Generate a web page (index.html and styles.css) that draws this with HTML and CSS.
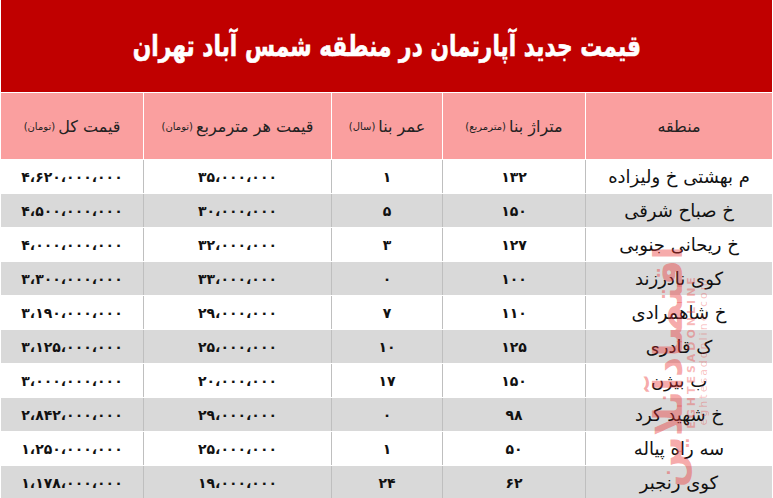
FILE: index.html
```html
<!DOCTYPE html>
<html lang="fa" dir="rtl">
<head>
<meta charset="utf-8">
<link rel="stylesheet" href="styles.css">
</head>
<body>
<div class="page">
  <div class="title"><span class="title-text">قیمت جدید آپارتمان در منطقه شمس آباد تهران</span></div>
  <div class="row head">
    <div class="cell">منطقه</div>
    <div class="cell">متراژ بنا <small>(مترمربع)</small></div>
    <div class="cell">عمر بنا <small>(سال)</small></div>
    <div class="cell">قیمت هر مترمربع <small>(تومان)</small></div>
    <div class="cell">قیمت کل<small>(تومان)</small></div>
  </div>
  <div class="row"><div class="cell name">م بهشتی خ ولیزاده</div><div class="cell num">۱۳۲</div><div class="cell num">۱</div><div class="cell num">۳۵،۰۰۰،۰۰۰</div><div class="cell num">۴،۶۲۰،۰۰۰،۰۰۰</div></div>
  <div class="row alt"><div class="cell name">خ صباح شرقی</div><div class="cell num">۱۵۰</div><div class="cell num">۵</div><div class="cell num">۳۰،۰۰۰،۰۰۰</div><div class="cell num">۴،۵۰۰،۰۰۰،۰۰۰</div></div>
  <div class="row"><div class="cell name">خ ریحانی جنوبی</div><div class="cell num">۱۲۷</div><div class="cell num">۳</div><div class="cell num">۳۲،۰۰۰،۰۰۰</div><div class="cell num">۴،۰۰۰،۰۰۰،۰۰۰</div></div>
  <div class="row alt"><div class="cell name">کوی نادرزند</div><div class="cell num">۱۰۰</div><div class="cell num">۰</div><div class="cell num">۳۳،۰۰۰،۰۰۰</div><div class="cell num">۳،۳۰۰،۰۰۰،۰۰۰</div></div>
  <div class="row"><div class="cell name">خ شاهمرادی</div><div class="cell num">۱۱۰</div><div class="cell num">۷</div><div class="cell num">۲۹،۰۰۰،۰۰۰</div><div class="cell num">۳،۱۹۰،۰۰۰،۰۰۰</div></div>
  <div class="row alt"><div class="cell name">ک قادری</div><div class="cell num">۱۲۵</div><div class="cell num">۱۰</div><div class="cell num">۲۵،۰۰۰،۰۰۰</div><div class="cell num">۳،۱۲۵،۰۰۰،۰۰۰</div></div>
  <div class="row"><div class="cell name">ب بیژن</div><div class="cell num">۱۵۰</div><div class="cell num">۱۷</div><div class="cell num">۲۰،۰۰۰،۰۰۰</div><div class="cell num">۳،۰۰۰،۰۰۰،۰۰۰</div></div>
  <div class="row alt"><div class="cell name">خ شهید کرد</div><div class="cell num">۹۸</div><div class="cell num">۰</div><div class="cell num">۲۹،۰۰۰،۰۰۰</div><div class="cell num">۲،۸۴۲،۰۰۰،۰۰۰</div></div>
  <div class="row"><div class="cell name">سه راه پیاله</div><div class="cell num">۵۰</div><div class="cell num">۱</div><div class="cell num">۲۵،۰۰۰،۰۰۰</div><div class="cell num">۱،۲۵۰،۰۰۰،۰۰۰</div></div>
  <div class="row alt"><div class="cell name">کوی رنجبر</div><div class="cell num">۶۲</div><div class="cell num">۲۴</div><div class="cell num">۱۹،۰۰۰،۰۰۰</div><div class="cell num">۱،۱۷۸،۰۰۰،۰۰۰</div></div>

  <div class="wm">
    <div class="wm-logo">اقتصادآنلاین</div>
    <div class="wm-en">EGHTESADONLINE</div>
    <div class="wm-url">eghtesadonline.com</div>
  </div>
</div>
</body>
</html>
```
FILE: styles.css
```css
html, body {
  margin: 0;
  padding: 0;
  background: #ffffff;
}
.page {
  position: relative;
  width: 771px;
  margin: 0 1px;
  font-family: "DejaVu Sans", sans-serif;
  color: #111;
  overflow: hidden;
  height: 498px;
}
.title {
  height: 92px;
  margin-bottom: 1px;
  background: #c00000;
  color: #ffffff;
  display: flex;
  align-items: center;
  justify-content: center;
}
.title-text {
  display: inline-block;
  font-weight: bold;
  font-size: 29px;
  white-space: nowrap;
  transform: scaleX(0.75);
  -webkit-text-stroke: 0.6px #ffffff;
}
.row {
  display: grid;
  grid-template-columns: 187px 143px 111px 188px 142px;
  height: 33px;
  margin-bottom: 1px;
  background: #ffffff;
}
.row.alt {
  background: #d9d9d9;
}
.row.head {
  height: 66px;
  background: #fa9f9f;
}
.cell {
  display: flex;
  align-items: center;
  justify-content: center;
  border-left: 1px solid #bfbfbf;
  white-space: nowrap;
}
.cell:last-child {
  border-left: none;
}
.head .cell {
  border-left-color: #ffffff;
  font-size: 16px;
  color: #222;
}
.head small {
  font-size: 10px;
  margin-right: 3px;
}
.name {
  font-size: 18px;
}
.num {
  font-size: 14px;
  font-weight: bold;
}
.wm {
  position: absolute;
  left: 644px;
  top: 245px;
  width: 72px;
  height: 225px;
  pointer-events: none;
}
.wm-logo, .wm-en, .wm-url {
  position: absolute;
  white-space: nowrap;
  transform: rotate(-90deg);
  transform-origin: center center;
}
.wm-logo {
  left: -87px;
  top: 88px;
  width: 220px;
  text-align: center;
  font-size: 40px;
  font-weight: bold;
  color: rgba(235, 50, 50, 0.42);
}
.wm-en {
  left: -54px;
  top: 100px;
  width: 200px;
  text-align: center;
  font-size: 11px;
  font-weight: bold;
  letter-spacing: 3px;
  color: rgba(235, 50, 50, 0.35);
}
.wm-url {
  left: -42px;
  top: 100px;
  width: 200px;
  text-align: center;
  font-size: 11px;
  letter-spacing: 2px;
  color: rgba(235, 50, 50, 0.3);
}
```
